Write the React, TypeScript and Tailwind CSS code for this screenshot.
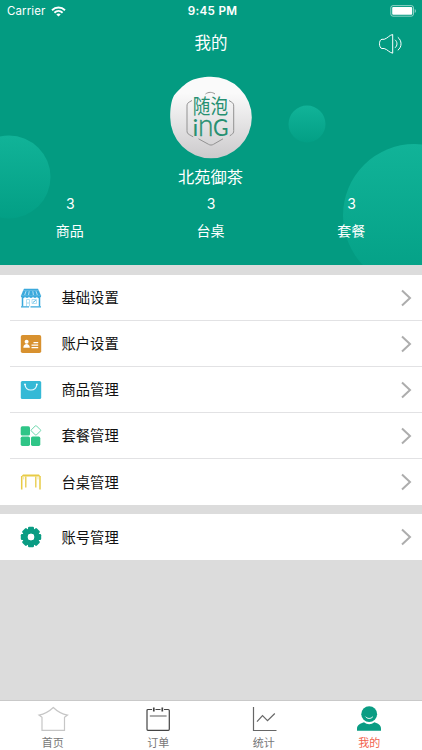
import React from 'react';

interface MenuItem {
  label: string;
  icon: React.ReactNode;
}

interface TabItem {
  label: string;
  icon: React.ReactNode;
  active?: boolean;
}

const ShopIcon = () => (
  <svg width="22" height="20" viewBox="0 0 22 20" fill="none">
    <path d="M4 0.800h14l1 2H3z" fill="#3aa9dc" />
    <path d="M3 2.800h16l2 5H1z" fill="#3aa9dc" />
    <path d="M6 3.200L4.700 7M9.200 3.200L8.600 7M12.800 3.200l.6 3.800M16 3.200L17.300 7" stroke="#d8f0fb" strokeWidth="0.800" />
    <path d="M0.800 7.500h20.400c0 3.500-4.200 3.500-4.200.8 0 2.300-4 2.300-4 0 0 2.300-4 2.300-4 0 0 2.300-4 2.300-4 0 0 2.700-4.200 2.700-4.200-.8z" fill="#3aa9dc" />
    <path d="M2.500 10v8.500M19.500 10v8.500" stroke="#3aa9dc" strokeWidth="1.500" />
    <path d="M6.500 18.500V11.500h3v7M12 11.500h4.500v4H12z" stroke="#a9dbf2" strokeWidth="0.900" />
    <path d="M12.800 14.600l3-2.300M7.500 15h1" stroke="#3aa9dc" strokeWidth="0.900" />
    <path d="M1 18.800h8M10.500 18.800H21" stroke="#3aa9dc" strokeWidth="1.300" />
  </svg>
);

const CardIcon = () => (
  <svg width="22" height="20" viewBox="0 0 22 20" fill="none">
    <rect x="0.800" y="1" width="20.400" height="18" rx="1.800" fill="#d8912f" />
    <circle cx="6.600" cy="7.800" r="2" fill="#fff" />
    <path d="M3.300 13.800c0-5 6.500-5 6.500 0z" fill="#fff" />
    <path d="M13.500 8.700h4.700M11.500 11.200h6.700M11.500 13.600h6.700" stroke="#fff" strokeWidth="1.200" />
  </svg>
);

const BagIcon = () => (
  <svg width="22" height="20" viewBox="0 0 22 20" fill="none">
    <rect x="0.800" y="1" width="20.400" height="18" rx="1.500" fill="#35b9d6" />
    <path d="M5 4.500c.8 7.300 11 7.300 11.800 0" stroke="#e9faff" strokeWidth="1.200" strokeLinecap="round" />
    <circle cx="5" cy="4.400" r="0.900" fill="#fff" />
    <circle cx="16.800" cy="4.400" r="0.900" fill="#fff" />
  </svg>
);

const BlocksIcon = () => (
  <svg width="22" height="22" viewBox="0 0 22 22" fill="none">
    <rect x="0.700" y="1.300" width="9.300" height="9.300" rx="1.600" fill="#2fc587" />
    <rect x="0.700" y="11.600" width="9.300" height="9.300" rx="1.600" fill="#2fc587" />
    <rect x="11" y="11.600" width="9.300" height="9.300" rx="1.600" fill="#2fc587" />
    <rect x="12.300" y="1.800" width="7.200" height="7.200" rx="0.800" stroke="#62d4a6" strokeWidth="0.900" transform="rotate(45 15.900 5.400)" />
  </svg>
);

const TableIcon = () => (
  <svg width="22" height="20" viewBox="0 0 22 20" fill="none">
    <path d="M1.300 4.600L3 2.500h16l1.500 2.100z" fill="#e8cb45" />
    <path d="M1.700 4v13.500M20 4v13.500" stroke="#e8cb45" strokeWidth="1.500" />
    <path d="M5.800 4.500v11M15.800 4.500v11" stroke="#e8cb45" strokeWidth="1.300" />
    <path d="M3.700 4.500v3M18 4.500v3" stroke="#f2e3a0" strokeWidth="1" />
  </svg>
);

const GearIcon = () => (
  <svg width="22" height="22" viewBox="0 0 22 22">
    <g fill="#0a9c83">
      {[0, 45, 90, 135, 180, 225, 270, 315].map((angle) => (
        <rect key={angle} x="8" y="0.800" width="6" height="6" rx="1.200" transform={`rotate(${angle} 11 11)`} />
      ))}
    </g>
    <circle cx="11" cy="11" r="5.900" fill="none" stroke="#0a9c83" strokeWidth="5.400" />
    <circle cx="11" cy="11" r="3.200" fill="#fff" />
  </svg>
);

const HomeIcon = () => (
  <svg width="32" height="26" viewBox="0 0 32 26" fill="none" stroke="#c6c6c6" strokeWidth="1.200">
    <path d="M16.300 1.500c-4 3.800-9 6.600-14.300 7.600l3 2.200v13h22.500v-13l3-2.200C25.200 8.100 20.200 5.300 16.300 1.500z" />
  </svg>
);

const OrderIcon = () => (
  <svg width="26" height="26" viewBox="0 0 26 26" fill="none" stroke="#444" strokeWidth="1.200">
    <path d="M5.500 3.500H3a1 1 0 0 0-1 1v18.800a1 1 0 0 0 1 1h20.300a1 1 0 0 0 1-1V4.500a1 1 0 0 0-1-1h-2.600M5.500 3.500h1.500M10.500 3.500h5M19 3.500h2" />
    <path d="M4.800 10h16.800" stroke="#777" />
    <path d="M8.800 1.500v4M17.300 1.500v4" strokeWidth="1.700" />
  </svg>
);

const StatsIcon = () => (
  <svg width="26" height="26" viewBox="0 0 26 26" fill="none" stroke="#666" strokeWidth="1.200">
    <path d="M2.500 1v23.500h23" />
    <path d="M6 15.700l5.500-6 5 5 7.300-7.200" />
  </svg>
);

const UserIcon = () => (
  <svg width="26" height="26" viewBox="0 0 26 26" fill="none">
    <circle cx="13.200" cy="8.200" r="7.900" fill="#0a9c83" />
    <path d="M1 24.700v-2c0-3.800 3.500-5.400 7-6.400 3 2.500 7.400 2.500 10.400 0 3.500 1 6.600 2.600 6.600 6.400v2z" fill="#0a9c83" />
    <path d="M9.800 11c1.500 2 5.200 2 6.800 0" stroke="#fff" strokeWidth="1" strokeLinecap="round" />
  </svg>
);

const settings: MenuItem[] = [
  { label: '基础设置', icon: <ShopIcon /> },
  { label: '账户设置', icon: <CardIcon /> },
  { label: '商品管理', icon: <BagIcon /> },
  { label: '套餐管理', icon: <BlocksIcon /> },
  { label: '台桌管理', icon: <TableIcon /> },
];

const account: MenuItem[] = [{ label: '账号管理', icon: <GearIcon /> }];

const stats = [
  { label: '商品', value: 3 },
  { label: '台桌', value: 3 },
  { label: '套餐', value: 3 },
];

const tabs: TabItem[] = [
  { label: '首页', icon: <HomeIcon /> },
  { label: '订单', icon: <OrderIcon /> },
  { label: '统计', icon: <StatsIcon /> },
  { label: '我的', icon: <UserIcon />, active: true },
];

const StatusBar = () => (
  <div className="grid h-[22px] grid-cols-3 items-center pr-[5px] pl-[7px] font-['Inter','Liberation_Sans',sans-serif] text-[11px] leading-none">
    <div className="flex items-center gap-[6px]">
      <span className="pt-px text-[11.5px] tracking-[0.1px]">Carrier</span>
      <svg width="15" height="11" viewBox="0 0 15 11" fill="none" stroke="#fff" strokeWidth="1.900">
        <path d="M1 4.200c3.700-3.600 9.300-3.600 13 0" />
        <path d="M3.400 6.700c2.400-2.300 5.800-2.300 8.200 0" />
        <path d="M7.500 10.500L5.300 8.400c1.300-1.100 3.100-1.100 4.400 0z" fill="#fff" stroke="none" />
      </svg>
    </div>
    <div className="pt-px pl-px text-center text-[11.7px] font-semibold tracking-[0.3px] whitespace-nowrap">9:45 PM</div>
    <div className="flex justify-end">
      <svg width="27" height="12" viewBox="0 0 27 12" fill="none">
        <rect x="0.800" y="0.600" width="22.700" height="10.600" rx="2.200" stroke="#fff" strokeOpacity="0.550" />
        <rect x="2.200" y="2" width="20" height="7.800" rx="1" fill="#fff" />
        <path d="M24.700 4v4c1.800-.6 1.800-3.400 0-4z" fill="#fff" fillOpacity="0.500" />
      </svg>
    </div>
  </div>
);

const Avatar = () => (
  <svg width="84" height="84" viewBox="0 0 84 84" fill="none">
    <defs>
      <linearGradient id="avatar" x1="0" y1="0" x2="0" y2="1">
        <stop offset="0.200" stopColor="#fafafa" />
        <stop offset="1" stopColor="#cccacc" />
      </linearGradient>
    </defs>
    <path d="M42 0.700A40.800 40.800 0 1 1 1.200 41.500C1.200 33 2 25 5 19.500 8 15.500 14 9.500 19 6.200 26 2 34 .7 42 .7z" fill="url(#avatar)" />
    <path d="M36.500 18c3-2.200 6.500-2.200 9.500 0M23 24.500l-2.800 1.600c-1.700 1-2.200 2-2.200 4v24.500c0 2 .5 3 2.200 4l4 2.300M29.500 62.800l10 5.500c1.700 1 3.300 1 5 0l9.500-5.500M60 24.500l2.500 1.600c1.700 1 2.200 2 2.200 4v24.500c0 2-.5 3-2.200 4l-1.700 1.200" stroke="#929292" strokeWidth="1" />
    <g fill="#269071">
      <text transform="translate(23.800 38) scale(1 1.140)" fontSize="17.600" className="font-['Noto_Sans_CJK_SC',sans-serif]">随泡</text>
      <text transform="translate(23.500 60)" className="font-['Lato','Noto_Sans',sans-serif]">
        <tspan x="0" fontSize="24">i</tspan>
        <tspan x="5.500" fontSize="32" fontWeight="300" stroke="#269071" strokeWidth="0.400" textLength="15.500" lengthAdjust="spacingAndGlyphs">n</tspan>
        <tspan x="20.500" fontSize="23.500" textLength="15.500" lengthAdjust="spacingAndGlyphs">G</tspan>
      </text>
    </g>
  </svg>
);

const Backdrop = () => (
  <svg className="absolute inset-0" width="422" height="265" viewBox="0 0 422 265">
    <defs>
      <linearGradient id="bubble" x1="0" y1="0" x2="0" y2="1">
        <stop offset="0" stopColor="#11b398" />
        <stop offset="1" stopColor="#039f85" />
      </linearGradient>
    </defs>
    <circle cx="9" cy="177" r="41.500" fill="url(#bubble)" />
    <circle cx="307" cy="124" r="18.500" fill="url(#bubble)" />
    <circle cx="414.500" cy="215.500" r="71.500" fill="url(#bubble)" />
  </svg>
);

const MenuRow: React.FC<{ item: MenuItem }> = ({ item }) => (
  <div className="group bg-white pl-[10px]">
    <div className="flex h-[46px] items-center border-b border-[#e2e2e4] pr-[10px] pl-[10px] group-last:border-b-0">
      <div className="flex w-[22px] justify-center">{item.icon}</div>
      <span className="ml-[19.500px] flex-1 pb-px text-[14.3px] leading-5 text-[#111]">{item.label}</span>
      <svg width="12" height="18" viewBox="0 0 12 18" fill="none">
        <path d="M2 1.500l8 7.500-8 7.500" stroke="#adadad" strokeWidth="2" />
      </svg>
    </div>
  </div>
);

const MenuGroup: React.FC<{ items: MenuItem[] }> = ({ items }) => (
  <div>
    {items.map((item) => (
      <MenuRow key={item.label} item={item} />
    ))}
  </div>
);

const App: React.FC = () => {
  return (
    <div className="flex h-[750px] w-[422px] flex-col overflow-hidden bg-[#dcdcdc] font-['Noto_Sans_CJK_SC',sans-serif]">
      {/* Profile header */}
      <header className="relative h-[265px] shrink-0 overflow-hidden bg-[#039b81] text-white">
        <Backdrop />
        <div className="relative">
          <StatusBar />
          <div className="grid h-[44px] grid-cols-3 items-center">
            <h1 className="col-start-2 pb-[4px] text-center text-[16.5px] leading-6">我的</h1>
            <div className="flex justify-end pr-[19px]">
              <svg width="25" height="22" viewBox="0 0 25 22" fill="none" stroke="#fff" strokeWidth="1">
                <path d="M14.700 1.500v18.700c-3.500-.7-5.200-3.700-8.500-4.700H4C2.300 15.500 1.500 12.800 1.500 10.800S2.300 6.300 4 6.300h2.200c3.300-1 5-4.100 8.500-4.800z" />
                <path d="M17 6.800c2.600 2.100 2.600 5.900 0 8M19.800 4.300c4.300 3.300 4.300 9.700 0 13" />
              </svg>
            </div>
          </div>
          <div className="flex flex-col items-center pt-[10px]">
            <Avatar />
            <div className="mt-[4px] pr-px text-[16.300px] leading-6">北苑御茶</div>
          </div>
          <div className="grid grid-cols-3 pt-[6px] text-center">
            {stats.map((stat) => (
              <div key={stat.label}>
                <div className="font-['Inter',sans-serif] text-[14px] leading-5">{stat.value}</div>
                <div className="mt-[6px] pr-px text-[14px] leading-5">{stat.label}</div>
              </div>
            ))}
          </div>
        </div>
      </header>

      {/* Menu */}
      <main className="flex flex-1 flex-col gap-[9px] pt-[10px]">
        <MenuGroup items={settings} />
        <MenuGroup items={account} />
      </main>

      {/* Tab bar */}
      <nav className="grid h-[50px] grid-cols-4 border-t border-[#c9c9c9] bg-white pt-[5px]">
        {tabs.map((tab) => (
          <div key={tab.label} className="flex flex-col items-center">
            {tab.icon}
            <span className={`mt-[2px] text-[11px] leading-4 ${tab.active ? 'text-[#f2634d]' : 'text-[#777]'}`}>{tab.label}</span>
          </div>
        ))}
      </nav>
    </div>
  );
};

export default App;
